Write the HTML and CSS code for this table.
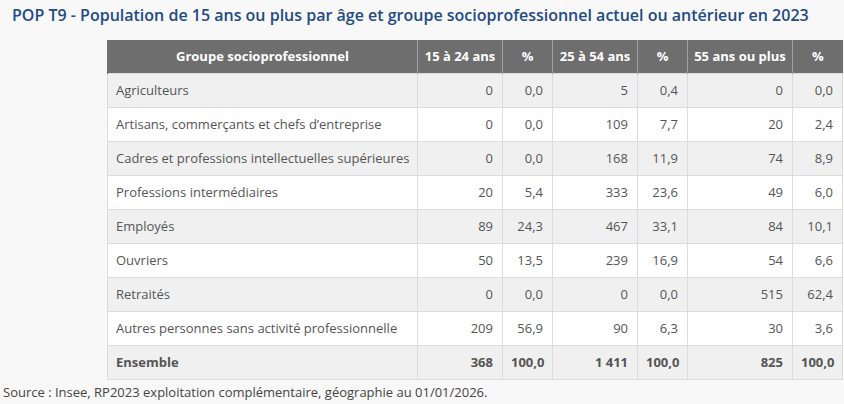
FILE: index.html
```html
<!DOCTYPE html>
<html lang="fr">
<head>
<meta charset="utf-8">
<title>POP T9</title>
<link rel="stylesheet" href="styles.css">
</head>
<body>
<h1 class="title">POP T9 - Population de 15 ans ou plus par âge et groupe socioprofessionnel actuel ou antérieur en 2023</h1>
<div class="table-wrap">
<table class="data">
<colgroup>
<col class="c-label"><col class="c-num"><col class="c-pct"><col class="c-num"><col class="c-pct"><col class="c-num2"><col class="c-pct">
</colgroup>
<thead>
<tr><th>Groupe socioprofessionnel</th><th>15 à 24 ans</th><th>%</th><th>25 à 54 ans</th><th>%</th><th>55 ans ou plus</th><th>%</th></tr>
</thead>
<tbody>
<tr><td class="label">Agriculteurs</td><td>0</td><td>0,0</td><td>5</td><td>0,4</td><td>0</td><td>0,0</td></tr>
<tr><td class="label">Artisans, commerçants et chefs d’entreprise</td><td>0</td><td>0,0</td><td>109</td><td>7,7</td><td>20</td><td>2,4</td></tr>
<tr><td class="label">Cadres et professions intellectuelles supérieures</td><td>0</td><td>0,0</td><td>168</td><td>11,9</td><td>74</td><td>8,9</td></tr>
<tr><td class="label">Professions intermédiaires</td><td>20</td><td>5,4</td><td>333</td><td>23,6</td><td>49</td><td>6,0</td></tr>
<tr><td class="label">Employés</td><td>89</td><td>24,3</td><td>467</td><td>33,1</td><td>84</td><td>10,1</td></tr>
<tr><td class="label">Ouvriers</td><td>50</td><td>13,5</td><td>239</td><td>16,9</td><td>54</td><td>6,6</td></tr>
<tr><td class="label">Retraités</td><td>0</td><td>0,0</td><td>0</td><td>0,0</td><td>515</td><td>62,4</td></tr>
<tr><td class="label">Autres personnes sans activité professionnelle</td><td>209</td><td>56,9</td><td>90</td><td>6,3</td><td>30</td><td>3,6</td></tr>
<tr class="total"><td class="label">Ensemble</td><td>368</td><td>100,0</td><td>1 411</td><td>100,0</td><td>825</td><td>100,0</td></tr>
</tbody>
</table>
</div>
<p class="source">Source : Insee, RP2023 exploitation complémentaire, géographie au 01/01/2026.</p>
</body>
</html>
```
FILE: styles.css
```css
html, body {
  margin: 0;
  padding: 0;
}
body {
  background: #f8f8f8;
  font-family: "Open Sans", "Liberation Sans", sans-serif;
  color: #555;
  width: 844px;
  height: 404px;
  overflow: hidden;
}
.title {
  margin: 0;
  padding: 5px 0 0 12px;
  font-size: 16px;
  line-height: 20px;
  font-weight: 600;
  color: #234a85;
  white-space: nowrap;
}
.table-wrap {
  padding: 15px 0 0 107px;
}
.data {
  border-collapse: collapse;
  table-layout: fixed;
  width: 735px;
  font-size: 13px;
  line-height: 19px;
}
.c-label { width: 310px; }
.c-num { width: 85px; }
.c-pct { width: 50px; }
.c-num2 { width: 105px; }
.data th {
  background: #6e6e6e;
  color: #fff;
  font-weight: 700;
  text-align: center;
  padding: 7px 4px;
  border-left: 1px solid #a0a0a0;
  white-space: nowrap;
}
.data th:first-child {
  border-left: 1px solid #6e6e6e;
}
.data td {
  padding: 7px 9px 7px 8px;
  text-align: right;
  border: 1px solid #dcdcdc;
  white-space: nowrap;
  height: 19px;
}
.data td.label {
  text-align: left;
  padding-left: 8px;
}
.data tbody tr:nth-child(odd) td {
  background: #f0f0f0;
}
.data tbody tr:nth-child(even) td {
  background: #fff;
}
.data tr.total td {
  font-weight: 700;
}
.source {
  margin: 3px 0 0 3px;
  font-size: 13px;
  line-height: 19px;
  color: #444;
}
```
